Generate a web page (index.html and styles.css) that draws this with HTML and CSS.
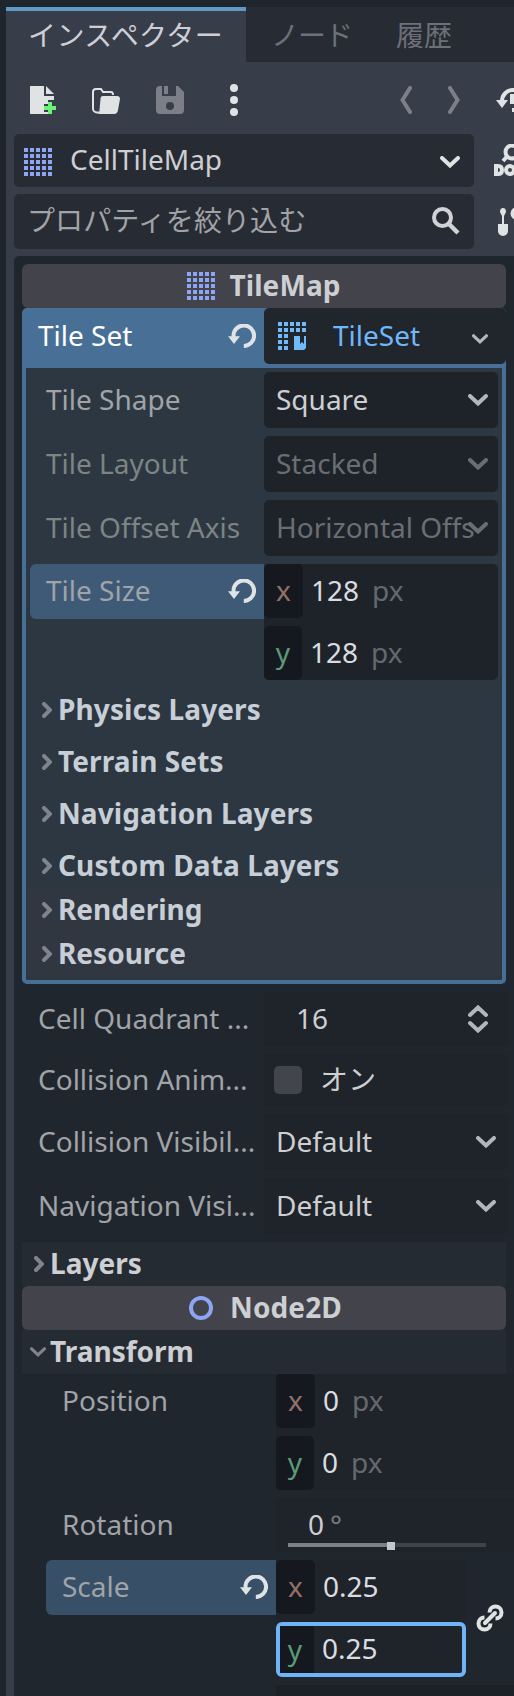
FILE: index.html
```
<!DOCTYPE html>
<html lang="ja">
<head>
<meta charset="utf-8">
<title>インスペクター</title>
<link rel="stylesheet" href="styles.css">
</head>
<body>
<svg class="defs" width="0" height="0" aria-hidden="true">
  <symbol id="down" viewBox="0 0 20 12"><path d="M2 2l8 7.5L18 2" fill="none" stroke="currentColor" stroke-width="4" stroke-linecap="round" stroke-linejoin="miter"/></symbol>
  <symbol id="right" viewBox="0 0 10 16"><path d="M2 2l6 6-6 6" fill="none" stroke="currentColor" stroke-width="4" stroke-linecap="round"/></symbol>
  <symbol id="revert" viewBox="0 0 28 24"><path d="M5.5 14.5V12a10.3 10.3 0 1 1 10.300 10" fill="none" stroke="currentColor" stroke-width="4"/><path d="M0 12.300h12L6 20z" fill="currentColor"/></symbol>
  <symbol id="grid" viewBox="0 0 28 28"><path d="M2 0v28M8 0v28M14 0v28M20 0v28M26 0v28" stroke="currentColor" stroke-width="4" stroke-dasharray="4 2"/></symbol>
</svg>
<main class="dock">
  <nav class="tabs">
    <div class="tab active">インスペクター</div>
    <div class="tab kana">ノード</div>
    <div class="tab">履歴</div>
  </nav>
  <div class="toolbar">
    <svg class="ic new" width="28" height="28" viewBox="0 0 28 28"><path d="M0 0h14v10h10v4h-6v4h-4v8h4v2H0zM16 0l8 8h-8z" fill="#e0e3e4"/><path d="M18 16h4v4h4v4h-4v4h-4v-4h-4v-4h4z" fill="#6cf27b"/></svg>
    <svg class="ic open" width="28" height="28" viewBox="0 0 28 28"><path d="M7 26.500H5a4 4 0 0 1-4-4V6a3 3 0 0 1 3-3h5l2 3h8q2 0 2 3" fill="none" stroke="#e0e3e4" stroke-width="2"/><path d="M11 10h14q3 0 3 3l-2 11q-.5 4-4 4H6q1.500-1 1.500-4l1-11q0-3 2.500-3z" fill="#e0e3e4"/></svg>
    <svg class="ic save" width="28" height="28" viewBox="0 0 28 28"><path fill="#7c7f88" fill-rule="evenodd" d="M4 0h2v10h14V0h2l6 6v18a4 4 0 0 1-4 4H4a4 4 0 0 1-4-4V4a4 4 0 0 1 4-4zm4 0h4v8H8zM14 16a4 4 0 1 0 0 8 4 4 0 0 0 0-8z"/></svg>
    <svg class="ic more" width="8" height="32" viewBox="0 0 8 32" fill="#e0e3e4"><circle cx="4" cy="4" r="4"/><circle cx="4" cy="16" r="4"/><circle cx="4" cy="28" r="4"/></svg>
    <svg class="ic back" width="12" height="28" viewBox="0 0 12 28"><path d="M10 2L2.500 14 10 26" fill="none" stroke="#7c7f88" stroke-width="4" stroke-linecap="round"/></svg>
    <svg class="ic fwd" width="12" height="28" viewBox="0 0 12 28"><path d="M2 2l7.500 12L2 26" fill="none" stroke="#7c7f88" stroke-width="4" stroke-linecap="round"/></svg>
    <svg class="ic hist" width="32" height="28" viewBox="0 0 32 28"><path d="M6 15A11 11 0 0 1 17 4a11 11 0 0 1 11 11" fill="none" stroke="#e0e3e4" stroke-width="4"/><path d="M0 14h12L6 22zM14 8h4v6h6v4H14zM16 22h6v4h-6z" fill="#e0e3e4"/></svg>
  </div>
  <div class="bar node">
    <div class="field"><svg class="grid" width="28" height="28"><use href="#grid"/></svg><span>CellTileMap</span><svg class="chev" width="20" height="12"><use href="#down"/></svg></div>
    <svg class="side" width="36" height="34" viewBox="0 0 36 34"><g fill="none" stroke="#e0e3e4" stroke-width="4"><circle cx="18" cy="8" r="6.500"/><path d="M13 12.500l-4 4.500"/><circle cx="16" cy="26" r="4"/></g><path d="M0 20h4q6 0 6 6t-6 6H0zM4 24v4q2 0 2-2t-2-2z" fill="#e0e3e4" fill-rule="evenodd"/></svg>
  </div>
  <div class="bar search">
    <div class="field"><span>プロパティを絞り込む</span><svg class="mag" width="28" height="28" viewBox="0 0 28 28" fill="none" stroke="#d0d2d6"><circle cx="10.500" cy="10.500" r="8.500" stroke-width="4"/><path d="M16 16l10 10" stroke-width="4.500"/></svg></div>
    <svg class="side" width="32" height="28" viewBox="0 0 32 28" fill="#e0e3e4"><path d="M5 0q3 0 3 4l-2 4v8h4v7a5 5 0 0 1-10 0v-7h4V8L2 4q0-4 3-4z"/><circle cx="19" cy="5.500" r="6.500"/></svg>
  </div>
  <section class="props">
    <h2 class="cat"><svg class="grid" width="28" height="28"><use href="#grid"/></svg><span>TileMap</span></h2>
    <div class="tileset">
      <div class="lab">Tile Set<svg class="rev" width="28" height="24"><use href="#revert"/></svg></div>
      <div class="res"><svg width="28" height="28" viewBox="0 0 28 28"><path d="M2 0v28M8 0v28M14 0v10M20 0v10M26 0v10" stroke="#70bafa" stroke-width="4" stroke-dasharray="4 2"/><path d="M16 14h6v8l2-2 2 2v-8h2v12l-2 2H16z" fill="#70bafa"/></svg><span>TileSet</span><svg width="16" height="10"><use href="#down"/></svg></div>
    </div>
    <div class="sub">
      <div class="row"><div class="lab">Tile Shape</div><div class="val">Square<svg class="chev" width="20" height="12"><use href="#down"/></svg></div></div>
      <div class="row off"><div class="lab">Tile Layout</div><div class="val">Stacked<svg class="chev" width="20" height="12"><use href="#down"/></svg></div></div>
      <div class="row off"><div class="lab">Tile Offset Axis</div><div class="val"><span class="long">Horizontal Offs</span><svg class="chev" width="20" height="12"><use href="#down"/></svg></div></div>
      <div class="row size"><div class="lab hl">Tile Size<svg class="rev" width="28" height="24"><use href="#revert"/></svg></div>
        <div class="vec"><div class="comp"><b class="x">x</b><span>128</span><i>px</i></div><div class="comp second"><b class="y">y</b><span>128</span><i>px</i></div></div></div>
      <div class="group"><svg width="10" height="16"><use href="#right"/></svg><span>Physics Layers</span></div>
      <div class="group"><svg width="10" height="16"><use href="#right"/></svg><span>Terrain Sets</span></div>
      <div class="group"><svg width="10" height="16"><use href="#right"/></svg><span>Navigation Layers</span></div>
      <div class="group"><svg width="10" height="16"><use href="#right"/></svg><span>Custom Data Layers</span></div>
      <div class="group tight"><svg width="10" height="16"><use href="#right"/></svg><span>Rendering</span></div>
      <div class="group tight"><svg width="10" height="16"><use href="#right"/></svg><span>Resource</span></div>
    </div>
    <div class="list">
      <div class="prow quad"><div class="lab">Cell Quadrant ...</div><div class="val">16<svg class="spin" width="20" height="28" viewBox="0 0 20 28" fill="none" stroke="currentColor" stroke-width="4" stroke-linecap="round"><path d="M2 10l8-7.500 8 7.500M2 18l8 7.500 8-7.500"/></svg></div></div>
      <div class="prow anim"><div class="lab">Collision Anim...</div><div class="val"><span class="check"></span>オン</div></div>
      <div class="prow"><div class="lab">Collision Visibil...</div><div class="val">Default<svg class="chev" width="20" height="12"><use href="#down"/></svg></div></div>
      <div class="prow"><div class="lab">Navigation Visi...</div><div class="val">Default<svg class="chev" width="20" height="12"><use href="#down"/></svg></div></div>
    </div>
    <div class="fold"><svg width="10" height="16"><use href="#right"/></svg><span>Layers</span></div>
    <h2 class="cat n2d"><svg width="24" height="24" viewBox="0 0 24 24"><circle cx="12" cy="12" r="10" fill="none" stroke="#8da5f3" stroke-width="4"/></svg><span>Node2D</span></h2>
    <div class="fold open-fold"><svg width="16" height="10"><use href="#down"/></svg><span>Transform</span></div>
    <div class="trow"><div class="lab">Position</div><div class="vec"><div class="comp"><b class="x">x</b><span>0</span><i>px</i></div><div class="comp second"><b class="y">y</b><span>0</span><i>px</i></div></div></div>
    <div class="trow rot"><div class="lab">Rotation</div><div class="angle"><div class="num">0<i>°</i></div><div class="slider"><span class="knob"></span></div></div></div>
    <div class="trow scale"><div class="lab hl">Scale<svg class="rev" width="28" height="24"><use href="#revert"/></svg></div>
      <div class="vec"><div class="comp"><b class="x">x</b><span>0.25</span></div><div class="comp second focus"><b class="y">y</b><span>0.25</span></div></div>
      <svg class="link" width="28" height="28" viewBox="0 0 28 28" fill="none" stroke="#e0e3e4" stroke-width="4"><path d="M13.500 8.500A6 6 0 1 1 19.500 14.500M14.500 19.500A6 6 0 1 1 8.500 13.500"/><path d="M9 19L19 9" stroke-linecap="round"/></svg></div>
    <div class="next"></div>
  </section>
</main>
</body>
</html>
```
FILE: styles.css
```
* { box-sizing: border-box; }
body { margin: 0; width: 514px; height: 1696px; overflow: hidden; background: #1f252c; color: #cdcfd3; font: 28px/38px "Noto Sans", "Noto Sans CJK JP", sans-serif; }
svg { display: block; flex: none; }
.defs { position: absolute; }
i { font-style: normal; }
b { font-weight: 400; }
.dock { margin: 7px 0 0 6px; height: 1689px; background: #383d4a; overflow: hidden; white-space: nowrap; }
.tabs { display: flex; height: 55px; background: #272b33; }
.tab { font-family: "Noto Sans CJK JP", sans-serif; line-height: 54px; padding-left: 24px; color: #6d7078; width: 126px; }
.tab.kana { letter-spacing: -1px; padding-left: 25px; }
.tab.active { width: 240px; padding-left: 22px; background: #383d4a; border-top: 4px solid #6098c6; line-height: 47px; color: #cdcfd6; letter-spacing: 0.4px; }
.toolbar { display: flex; align-items: center; height: 72px; padding: 4px 0 0 24px; }
.open { margin-left: 34px; }
.save { margin-left: 36px; }
.more { margin-left: 46px; }
.back { margin-left: 162px; }
.fwd { margin-left: 36px; }
.hist { margin-left: 36px; }
.bar { display: flex; align-items: center; padding-left: 8px; }
.bar .side { margin-left: 20px; }
.search .side { margin-left: 24px; }
.field { display: flex; align-items: center; width: 460px; height: 53px; border-radius: 5px; background: #272b33; padding: 0 14px 0 10px; flex: none; }
.field > span { flex: 1; padding-bottom: 3px; }
.grid { color: #8da5f3; }
.node .grid { margin: 3px 18px 0 0; }
.node .chev { color: #e0e3e4; margin-top: 2px; }
.search { margin-top: 7px; }
.search .field { height: 55px; padding: 0 14px 0 13px; color: #a0a3a7; font-family: "Noto Sans CJK JP", sans-serif; letter-spacing: 0.1px; }
.search .field > span { padding-bottom: 5px; }
.mag { margin-bottom: 2px; }
.props { margin: 7px 0 0 8px; height: 1440px; padding: 8px 0 0 8px; background: #20262d; border-top-left-radius: 5px; }
.cat { display: flex; align-items: center; justify-content: center; gap: 14px; margin: 0; width: 484px; height: 44px; border-radius: 6px; background: #42434b; font-size: 28px; font-weight: 700; letter-spacing: 0.1px; }
.cat span, .group span, .fold span { padding-bottom: 2px; }
.tileset { display: flex; width: 484px; height: 60px; background: #487096; border-radius: 5px 5px 0 0; }
.tileset .lab { width: 242px; height: 56px; padding: 0 8px 3px 16px; color: #fff; }
.tileset .rev { margin-top: 3px; }
.lab { display: flex; align-items: center; justify-content: space-between; color: #a0a3a7; padding-bottom: 2px; }
.rev { color: #e0e3e4; margin-top: 2px; }
.res { display: flex; align-items: center; width: 242px; height: 56px; padding: 0 18px 0 14px; border-radius: 5px; background: #20262c; color: #70b6fa; }
.res span { flex: 1; margin-left: 27px; padding-bottom: 2px; }
.res svg:last-child { color: #b4b6ba; margin-top: 6px; }
.sub { width: 484px; height: 616px; border: 4px solid #487096; border-top: 0; border-radius: 0 0 5px 5px; background: #2c3742; padding: 4px 4px 0; }
.row { display: flex; height: 56px; margin-bottom: 8px; }
.row .lab { width: 234px; padding: 0 8px 2px 16px; }
.row .val { display: flex; align-items: center; width: 234px; height: 56px; padding: 0 10px 2px 12px; border-radius: 5px; background: #1d2329; }
.chev { margin-left: auto; margin-top: 2px; color: #b4b6ba; }
.off .lab { color: #7c8485; }
.off .val, .off .chev { color: #6a6e73; }
.long { margin-right: -24px; }
.size { height: 116px; margin: 0; }
.row .hl, .trow .hl { padding-bottom: 3px; }
.hl { background: #3e5a76; border-radius: 6px 0 0 6px; height: 55px; }
.size .vec { width: 234px; background: #1d2329; border-radius: 5px; }
.comp { display: flex; height: 54px; align-items: center; }
.comp b { width: 39px; height: 54px; line-height: 53px; text-align: center; background: #15191f; border-radius: 5px; margin-right: 8px; }
.comp i { color: #65686e; margin-left: 13px; padding-bottom: 2px; }
.comp span { color: #dadce0; padding-bottom: 2px; }
.second { margin-top: 8px; }
.second b { width: 38px; }
.x { color: #94706a; }
.y { color: #5a9b7a; }
.group { display: flex; align-items: center; height: 44px; margin-top: 8px; gap: 6px; padding-left: 12px; font-weight: 700; letter-spacing: 0.1px; color: #c8ced6; }
.group svg, .fold svg { color: #7f848c; }
.group.tight { background: #303741; margin: 0 -3px; padding-left: 15px; letter-spacing: 0; }
.list { margin-top: 8px; width: 486px; }
.prow { display: flex; height: 56px; margin-bottom: 8px; }
.prow .lab { width: 242px; padding-left: 16px; }
.prow .val { display: flex; align-items: center; width: 244px; padding: 0 12px 2px; background: #1e242a; }
.quad { height: 54px; }
.prow.quad .val { padding: 0 20px 2px 32px; }
.spin { margin-left: auto; margin-top: 2px; color: #b4b6ba; }
.anim { height: 52px; }
.prow.anim .val { padding-left: 10px; }
.check { width: 28px; height: 28px; margin: 2px 18px 0 0; border-radius: 5px; background: #42454b; }
.fold { display: flex; align-items: center; gap: 6px; width: 484px; height: 44px; padding-left: 12px; background: #252b33; font-weight: 700; }
.open-fold { padding-left: 8px; gap: 4px; }
.n2d { gap: 17px; padding-left: 3px; }
.trow { display: flex; width: 492px; }
.trow .lab { width: 254px; height: 54px; padding: 0 8px 3px 40px; }
.trow .vec { width: 238px; background: #1e242a; }
.rot { height: 54px; margin-top: 8px; }
.angle { position: relative; width: 238px; background: #1e242a; padding: 7px 0 0 32px; }
.angle i { color: #7a7d82; margin-left: 6px; }
.slider { position: absolute; left: 12px; top: 45px; width: 198px; height: 4px; background: linear-gradient(90deg, #7d8185 50%, #3f4349 50%); }
.knob { position: absolute; left: 99px; top: -1px; width: 8px; height: 8px; background: #c4c7ca; }
.scale { margin-top: 8px; }
.trow .hl { width: 230px; height: 55px; margin-left: 24px; padding-left: 16px; background: #375068; }
.scale .vec { width: 190px; }
.focus { height: 55px; border: 4px solid #70b4f8; border-radius: 6px; }
.comp.focus b { width: 34px; height: 47px; line-height: 47px; padding-right: 4px; border-radius: 0; }
.comp.focus span { padding-bottom: 3px; }
.link { margin: 44px 0 0 10px; }
.next { margin: 8px 0 0 254px; height: 20px; background: #1c2127; }
```
